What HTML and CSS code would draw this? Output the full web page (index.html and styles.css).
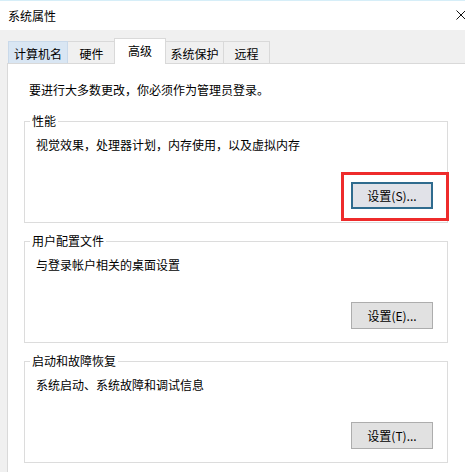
FILE: index.html
```html
<!DOCTYPE html>
<html lang="zh-CN">
<head>
<meta charset="utf-8">
<title>系统属性</title>
<link rel="stylesheet" href="styles.css">
</head>
<body>
<div class="titlebar">
  <span class="title">系统属性</span>
  <svg class="close" width="10" height="10" viewBox="0 0 10 10"><path d="M0.5 0.5L9.5 9.5M9.5 0.5L0.5 9.5" stroke="#111" stroke-width="1" fill="none"/></svg>
</div>
<div class="dialog">
  <div class="tabs">
    <div class="tab tab-hover w60">计算机名</div>
    <div class="tab w48">硬件</div>
    <div class="tab active w52">高级</div>
    <div class="tab w58">系统保护</div>
    <div class="tab w46">远程</div>
  </div>
  <div class="panel">
    <p class="intro">要进行大多数更改，你必须作为管理员登录。</p>
    <fieldset class="group">
      <legend>性能</legend>
      <p class="desc">视觉效果，处理器计划，内存使用，以及虚拟内存</p>
      <div class="actions">
        <div class="btn-wrap">
          <button class="btn primary">设置(S)...</button>
          <span class="highlight"></span>
        </div>
      </div>
    </fieldset>
    <fieldset class="group">
      <legend>用户配置文件</legend>
      <p class="desc">与登录帐户相关的桌面设置</p>
      <div class="actions">
        <button class="btn">设置(E)...</button>
      </div>
    </fieldset>
    <fieldset class="group">
      <legend>启动和故障恢复</legend>
      <p class="desc">系统启动、系统故障和调试信息</p>
      <div class="actions">
        <button class="btn">设置(T)...</button>
      </div>
    </fieldset>
  </div>
</div>
</body>
</html>
```
FILE: styles.css
```css
html, body {
  margin: 0;
  height: 472px;
  overflow: hidden;
  background: #f0f0f0;
  font-family: "Noto Sans CJK SC", "Microsoft YaHei", sans-serif;
  font-size: 12px;
  color: #000;
}

.titlebar {
  height: 30px;
  box-sizing: border-box;
  background: #fff;
  border-top: 1px solid #d6eef8;
  display: flex;
  align-items: center;
  justify-content: space-between;
  padding-left: 8px;
}

.title {
  line-height: 16px;
}

.close {
  margin-right: -1px;
  margin-top: -2px;
}

.dialog {
  padding: 8px 0 0 7px;
}

.tabs {
  display: flex;
  align-items: flex-end;
  height: 26px;
  margin-left: 1px;
  margin-bottom: -1px;
}

.tab {
  height: 22px;
  box-sizing: border-box;
  padding-top: 3px;
  line-height: 18px;
  border: 1px solid #d9d9d9;
  border-bottom: none;
  background: #f0f0f0;
  text-align: center;
  margin-bottom: 1px;
  white-space: nowrap;
}

.tab + .tab {
  border-left: none;
}

.tab-hover {
  background: #d9e6f3;
  border-color: #c9d9ea;
}

.tab.active {
  height: 26px;
  margin-bottom: 0;
  margin-left: -2px;
  background: #fff;
  border-left: 1px solid #d9d9d9;
  position: relative;
  z-index: 1;
}

.tab.active + .tab {
  border-left: none;
}

.w60 { width: 60px; }
.w48 { width: 48px; }
.w52 { width: 52px; }
.w58 { width: 58px; }
.w46 { width: 46px; }

.panel {
  background: #fff;
  border: 1px solid #d9d9d9;
  border-right: none;
  border-bottom: none;
  height: 390px;
  padding: 18px 0 0 16px;
}

.intro {
  margin: 0 0 15px 5px;
  line-height: 16px;
}

.group {
  width: 424px;
  box-sizing: border-box;
  margin: 0 0 10px 0;
  border: 1px solid #dcdcdc;
  padding: 0 14px 13px 11px;
  min-width: 0;
}

.group:last-child {
  margin-bottom: 0;
}

.group legend {
  padding: 0 2px;
  margin-left: -6px;
  line-height: 16px;
}

.desc {
  margin: 8px 0 0 0;
  line-height: 16px;
}

.actions {
  display: flex;
  justify-content: flex-end;
  margin-top: 29px;
}

.btn-wrap {
  position: relative;
}

.btn {
  display: block;
  width: 82px;
  height: 27px;
  box-sizing: border-box;
  border: 1px solid #adadad;
  background: #e1e1e1;
  font-family: inherit;
  font-size: 12px;
  color: #000;
  padding: 0;
  line-height: 16px;
}

.btn.primary {
  border: 2px solid #2f6b8e;
  background: #e1e2e8;
}

.highlight {
  position: absolute;
  top: -10px;
  left: -10px;
  right: -16px;
  bottom: -12px;
  border: 3px solid #ee2b2b;
  pointer-events: none;
}
```
